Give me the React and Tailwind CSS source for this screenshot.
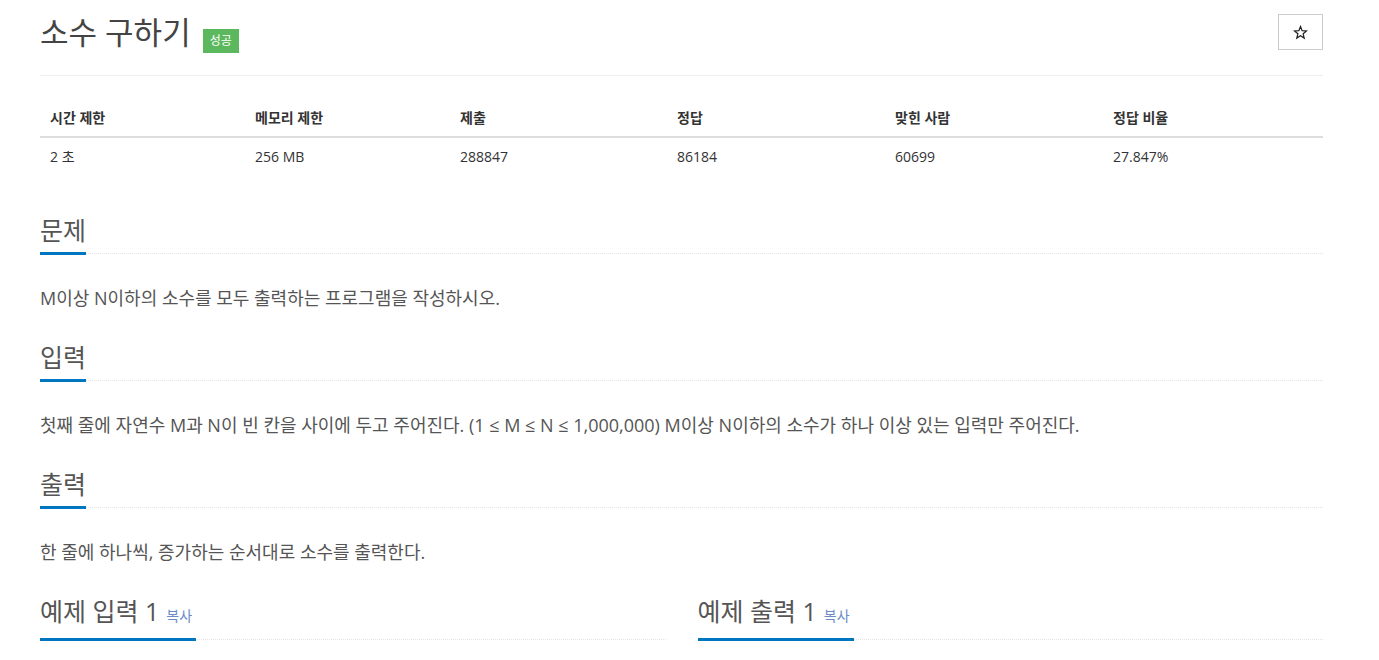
const font = "font-['Open_Sans','Noto_Sans_CJK_KR',sans-serif]";

const stats = [
  { label: '시간 제한', value: '2 초' },
  { label: '메모리 제한', value: '256 MB' },
  { label: '제출', value: '288847' },
  { label: '정답', value: '86184' },
  { label: '맞힌 사람', value: '60699' },
  { label: '정답 비율', value: '27.847%' },
];

const Headline = ({ children }) => (
  <div className="flex border-b border-dotted border-[#e5e5e5]">
    <h2 className="-mb-[2px] inline-block border-b-[3px] border-[#0076c0] pb-[6px] text-[25px] leading-[32px] font-normal text-[#555]">
      {children}
    </h2>
  </div>
);

const Section = ({ title, children }) => (
  <section>
    <Headline>{title}</Headline>
    <p className="mt-[32px] mb-[31px] text-[18px] leading-[24px] text-[#555]">{children}</p>
  </section>
);

const StarIcon = () => (
  <svg width="15" height="15" viewBox="0 0 24 24" fill="none" stroke="#222" strokeWidth="2" strokeLinejoin="miter">
    <path d="M12 2.5l2.6 6.6 7 .5-5.4 4.5 1.7 6.9L12 17.2 6.1 21l1.7-6.9L2.4 9.6l7-.5z" />
  </svg>
);

export default function App() {
  return (
    <div className={`${font} min-h-screen bg-white`}>
      <div className="mx-[40px] w-[1283px]">
        {/* Title */}
        <div className="flex items-start justify-between pt-[14px]">
          <div className="flex items-start">
            <h1 className="text-[31px] leading-[36px] font-normal text-[#444]">소수 구하기</h1>
            <span className="mt-[15px] ml-[12px] flex h-[24px] items-center bg-[#5cb85c] px-[7px] text-[12px] text-white">
              성공
            </span>
          </div>
          <button className="flex h-[36px] w-[45px] items-center justify-center border border-[#ccc] bg-white">
            <StarIcon />
          </button>
        </div>
        <div className="mt-[22px] border-t border-[#eee]" />

        {/* Stats table */}
        <div className="mt-[24px] text-[14px] leading-[20px]">
          <div className="grid grid-cols-[205px_205px_217px_218px_218px_1fr] border-b-2 border-[#ddd]">
            {stats.map((s) => (
              <div key={s.label} className="px-[10px] py-[8px] font-bold text-[#333]">
                {s.label}
              </div>
            ))}
          </div>
          <div className="grid grid-cols-[205px_205px_217px_218px_218px_1fr]">
            {stats.map((s) => (
              <div key={s.label} className="px-[10px] pt-[9px] pb-[7px] text-[#333]">
                {s.value}
              </div>
            ))}
          </div>
        </div>

        <div className="mt-[40px]">
          <Section title="문제">M이상 N이하의 소수를 모두 출력하는 프로그램을 작성하시오.</Section>
          <Section title="입력">
            첫째 줄에 자연수 M과 N이 빈 칸을 사이에 두고 주어진다. (1 ≤ M ≤ N ≤ 1,000,000) M이상 N이하의 소수가 하나 이상 있는 입력만 주어진다.
          </Section>
          <Section title="출력">한 줄에 하나씩, 증가하는 순서대로 소수를 출력한다.</Section>

          <div className="grid grid-cols-2 gap-[32px]">
            {['예제 입력 1', '예제 출력 1'].map((t) => (
              <Headline key={t}>
                {t}
                <span className="mr-[4px] ml-[7px] text-[14px] text-[#6b8cc8]">복사</span>
              </Headline>
            ))}
          </div>
        </div>
      </div>
    </div>
  );
}
